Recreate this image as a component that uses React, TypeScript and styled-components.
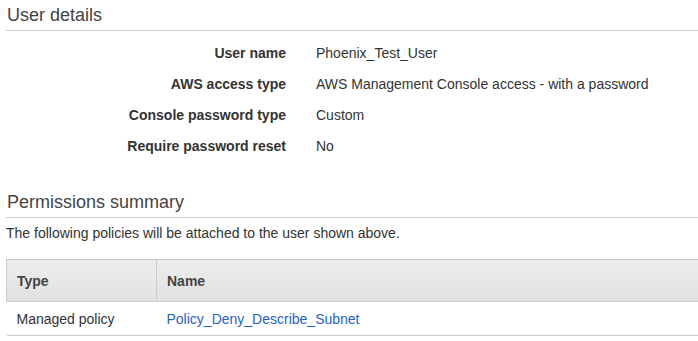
import React from "react";
import styled, { createGlobalStyle } from "styled-components";

const Global = createGlobalStyle`
  html, body { margin: 0; padding: 0; background: #fff; }
  body { font-family: "Liberation Sans", Arial, Helvetica, sans-serif; color: #444; }
`;

const Page = styled.div`
  width: 698px;
  height: 341px;
  overflow: hidden;
  padding-left: 6px;
  box-sizing: border-box;
`;

const Section = styled.section`
  display: flex;
  flex-direction: column;
`;

const Heading = styled.h2<{ $top: number }>`
  margin: 0;
  padding: ${(p) => p.$top}px 0 4px 1px;
  font-size: 18px;
  font-weight: normal;
  line-height: 22px;
  color: #444;
  border-bottom: 1px solid #ccc;
`;

const Details = styled.dl`
  margin: 0;
  padding-top: 7px;
  display: grid;
  grid-template-columns: 280px 1fr;
  column-gap: 30px;
`;

const Label = styled.dt`
  margin: 0;
  text-align: right;
  font-weight: bold;
  font-size: 14px;
  line-height: 31px;
  color: #333;
`;

const Value = styled.dd`
  margin: 0;
  font-size: 14px;
  line-height: 31px;
  color: #333;
`;

const Intro = styled.p`
  margin: 0;
  font-size: 14px;
  line-height: 31px;
  color: #333;
`;

const Table = styled.table`
  margin-top: 10px;
  width: 720px;
  border-collapse: collapse;
  font-size: 14px;
  color: #333;
`;

const Th = styled.th<{ $w?: number }>`
  width: ${(p) => (p.$w ? `${p.$w}px` : "auto")};
  height: 42px;
  padding: 0 10px;
  text-align: left;
  font-weight: bold;
  color: #444;
  background: linear-gradient(#ededed, #e1e1e1);
  border: 1px solid #ccc;
  border-right: none;
  box-sizing: border-box;
`;

const Td = styled.td`
  height: 34px;
  padding: 0 10px;
  border-bottom: 1px solid #ccc;
  box-sizing: border-box;
`;

const Link = styled.a`
  color: #1f63c4;
  text-decoration: none;
`;

const rows: [string, string][] = [
  ["User name", "Phoenix_Test_User"],
  ["AWS access type", "AWS Management Console access - with a password"],
  ["Console password type", "Custom"],
  ["Require password reset", "No"],
];

export default function App() {
  return (
    <Page>
      <Global />
      <Section>
        <Heading $top={4}>User details</Heading>
        <Details>
          {rows.map(([k, v]) => (
            <React.Fragment key={k}>
              <Label>{k}</Label>
              <Value>{v}</Value>
            </React.Fragment>
          ))}
        </Details>
      </Section>
      <Section>
        <Heading $top={29}>Permissions summary</Heading>
        <Intro>The following policies will be attached to the user shown above.</Intro>
        <Table>
          <thead>
            <tr>
              <Th $w={150}>Type</Th>
              <Th>Name</Th>
            </tr>
          </thead>
          <tbody>
            <tr>
              <Td>Managed policy</Td>
              <Td>
                <Link href="#">Policy_Deny_Describe_Subnet</Link>
              </Td>
            </tr>
          </tbody>
        </Table>
      </Section>
    </Page>
  );
}
